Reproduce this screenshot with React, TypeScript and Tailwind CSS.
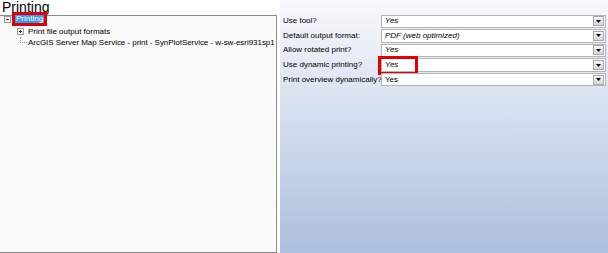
import React from 'react';

const rows = [
  { label: 'Use tool?', value: 'Yes', italic: true },
  { label: 'Default output format:', value: 'PDF (web optimized)', italic: true },
  { label: 'Allow rotated print?', value: 'Yes', italic: true },
  { label: 'Use dynamic printing?', value: 'Yes', italic: true, marked: true },
  { label: 'Print overview dynamically?', value: 'Yes', italic: false },
];

function ExpandBox({ sign }: { sign: '+' | '-' }) {
  return (
    <div className="relative w-[7px] h-[7px] border border-[#9a9a9a] bg-white shrink-0">
      <div className="absolute left-[1px] top-[2px] w-[3px] h-px bg-[#333]" />
      {sign === '+' && <div className="absolute left-[2px] top-[1px] w-px h-[3px] bg-[#333]" />}
    </div>
  );
}

function DropArrow() {
  return (
    <div className="w-[11px] h-[10px] mr-px border border-[#a8a8a8] bg-gradient-to-b from-[#f4f4f4] to-[#d8d8d8] flex items-center justify-center">
      <svg width="5" height="3" viewBox="0 0 5 3">
        <path d="M0 0 H5 L2.5 3 Z" fill="#000" />
      </svg>
    </div>
  );
}

export default function App() {
  return (
    <div
      className="w-[608px] h-[253px] bg-white flex overflow-hidden text-[8px] text-black"
      style={{ fontFamily: '"Liberation Sans", Arial, sans-serif' }}
    >
      {/* left column: title + tree */}
      <div className="w-[277px] flex flex-col">
        <div className="h-[15px] pl-[2px] text-[14px] leading-[14px]">Printing</div>
        <div className="flex-1 border-t border-r border-b border-[#8c8c8c] bg-[#f9f9f9] pl-[4px] whitespace-nowrap">
          <div className="relative z-10 flex items-center h-[10px] -mt-[2px] gap-[4px]">
            <ExpandBox sign="-" />
            <div className="relative">
              <div className="w-[29px] h-[8px] bg-[#3399ff] text-white pl-[1px] leading-[8px]">Printing</div>
              <div className="absolute -left-[3px] -top-[3px] -right-[3px] -bottom-[3px] border-[3px] border-[#e30000]" />
            </div>
          </div>
          <div className="flex items-center h-[11px] mt-[2px] pl-[13px] gap-[4px]">
            <ExpandBox sign="+" />
            <span>Print file output formats</span>
          </div>
          <div className="flex items-start h-[11px] pl-[16px] gap-[1px]">
            <div className="w-[7px] h-[6px] border-l border-b border-dotted border-[#999]" />
            <span className="leading-[11px] tracking-[-0.04px]">ArcGIS Server Map Service - print - SynPlotService - w-sw-esri931sp1</span>
          </div>
        </div>
      </div>

      {/* right column: property grid */}
      <div className="flex-1 ml-[3px] bg-gradient-to-b from-[#f8f9fc] to-[#acbfdd] pt-[14px] pr-[2px]">
        {rows.map((r) => (
          <div key={r.label} className="flex items-center h-[14.6px]">
            <div className="w-[101px] pl-[3px] whitespace-nowrap">{r.label}</div>
            <div className="relative flex-1 h-[13.5px] border border-[#b4b4b4] bg-white flex items-center">
              <span className={`flex-1 pl-[3px] ${r.italic ? 'italic' : ''}`}>{r.value}</span>
              <DropArrow />
              {r.marked && (
                <div className="absolute -left-[4px] -top-[3px] w-[40px] h-[19px] border-[3px] border-[#e30000]" />
              )}
            </div>
          </div>
        ))}
      </div>
    </div>
  );
}
